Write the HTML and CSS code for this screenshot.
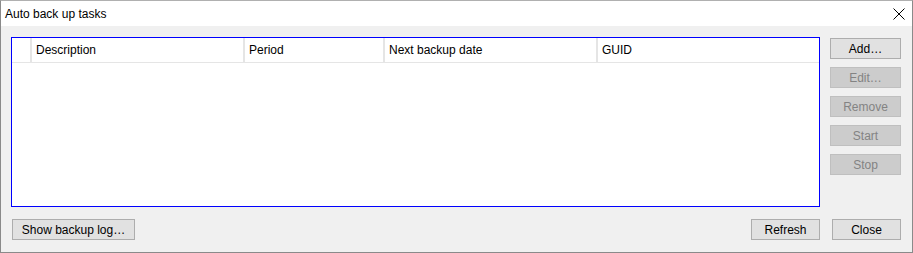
FILE: index.html
```html
<!DOCTYPE html>
<html lang="en">
<head>
    <meta charset="UTF-8">
    <title>Auto back up tasks</title>
    <link rel="stylesheet" href="styles.css">
</head>
<body>
    <div class="window">
        <div class="titlebar">
            <span class="title">Auto back up tasks</span>
            <span class="close-x">
                <svg width="12" height="12" viewBox="0 0 12 12"><path d="M0.5 0.5 L11.5 11.5 M11.5 0.5 L0.5 11.5" stroke="#000" stroke-width="1"/></svg>
            </span>
        </div>

        <div class="content">
            <div class="main-row">
                <div class="list">
                    <div class="list-head">
                        <div class="col c0"></div>
                        <div class="col c1">Description</div>
                        <div class="col c2">Period</div>
                        <div class="col c3">Next backup date</div>
                        <div class="col c4">GUID</div>
                    </div>
                </div>
                <div class="side">
                    <button class="btn">Add…</button>
                    <button class="btn" disabled>Edit…</button>
                    <button class="btn" disabled>Remove</button>
                    <button class="btn" disabled>Start</button>
                    <button class="btn" disabled>Stop</button>
                </div>
            </div>

            <div class="bottom-row">
                <button class="btn wide">Show backup log…</button>
                <div class="bottom-right">
                    <button class="btn mid">Refresh</button>
                    <button class="btn mid">Close</button>
                </div>
            </div>
        </div>
    </div>
</body>
</html>
```

FILE: styles.css
```css
body {
    margin: 0;
    padding: 0;
    font-family: "Liberation Sans", Arial, sans-serif;
    font-size: 12px;
    color: #000;
    background: #fff;
}

.window {
    width: 913px;
    height: 253px;
    box-sizing: border-box;
    border: 1px solid #8a8a8a;
    border-top-color: #b0b0b0;
    background: #f0f0f0;
    display: flex;
    flex-direction: column;
}

.titlebar {
    height: 25px;
    background: #fff;
    display: flex;
    align-items: center;
    justify-content: space-between;
    padding: 0 7px 0 4px;

    .close-x {
        display: flex;
        margin-top: 1px;
    }
}

.content {
    padding: 11px 11px 0 10px;
    display: flex;
    flex-direction: column;
}

.main-row {
    display: flex;
    gap: 10px;
}

.list {
    width: 809px;
    height: 170px;
    box-sizing: border-box;
    border: 1px solid #0000ff;
    background: #fff;
}

.list-head {
    display: flex;
    height: 25px;
    box-sizing: border-box;
    border-bottom: 1px solid #e5e5e5;

    .col {
        box-sizing: border-box;
        border-right: 2px solid #e5e5e5;
        padding-left: 4px;
        line-height: 24px;
        white-space: nowrap;
    }

    .c0 { width: 20px; }
    .c1 { width: 213px; }
    .c2 { width: 140px; }
    .c3 { width: 213px; }
    .c4 { flex-grow: 1; border-right: 0; }
}

.side {
    display: flex;
    flex-direction: column;
    gap: 8px;
    padding-top: 1px;
}

.btn {
    width: 71px;
    height: 21px;
    box-sizing: border-box;
    border: 1px solid #adadad;
    background: #e1e1e1;
    font-family: "Liberation Sans", Arial, sans-serif;
    font-size: 12px;
    color: #000;
    padding: 0;

    &[disabled] {
        background: #cccccc;
        border-color: #bfbfbf;
        color: #838383;
    }
}

.bottom-row {
    display: flex;
    justify-content: space-between;
    margin-top: 12px;
    padding-left: 1px;

    .wide { width: 123px; }
    .mid { width: 69px; }
}

.bottom-right {
    display: flex;
    gap: 12px;
}
```
